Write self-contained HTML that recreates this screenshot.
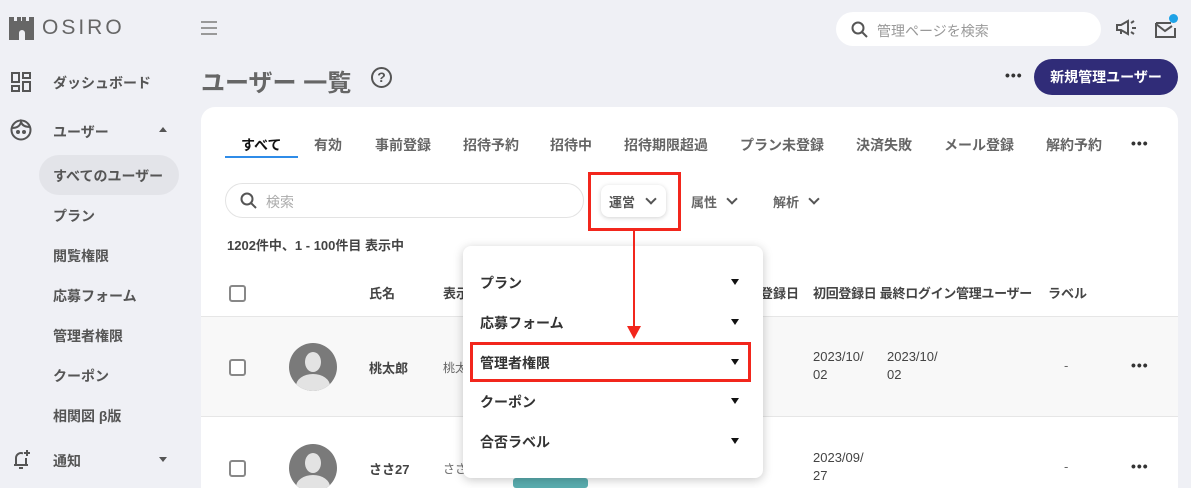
<!DOCTYPE html>
<html><head><meta charset="utf-8"><style>
*{margin:0;padding:0;box-sizing:border-box}
html,body{width:1191px;height:488px;overflow:hidden}
body{background:#eff0f5;font-family:"Liberation Sans","Noto Sans CJK JP",sans-serif;color:#555;position:relative}
.a{position:absolute;white-space:nowrap}
.b{font-weight:bold}
.side{font-size:14px;font-weight:bold;color:#555}
.tab{font-size:14px;font-weight:bold;color:#666;top:135px}
.cb{position:absolute;width:17px;height:17px;border:2px solid #888;border-radius:3px;background:#fff}
.av{position:absolute;width:48px;height:48px;border-radius:50%;background:#7a7a7a;overflow:hidden}
.av:before{content:"";position:absolute;left:16px;top:9px;width:16px;height:20px;border-radius:50%;background:#e3e3e3}
.av:after{content:"";position:absolute;left:7px;top:31px;width:34px;height:24px;border-radius:50% 50% 0 0;background:#e3e3e3}
.dd{font-size:14px;font-weight:bold;color:#333}
.tri{position:absolute;width:0;height:0;border-left:4px solid transparent;border-right:4px solid transparent;border-top:6px solid #111}
.dots{font-size:14px;font-weight:bold;color:#333;letter-spacing:1px}
.chev{position:absolute;width:8px;height:8px;border-right:2px solid #555;border-bottom:2px solid #555;transform:rotate(45deg)}
</style></head><body>
<svg class="a" style="left:9px;top:17px" width="25" height="23" viewBox="0 0 25 23"><path d="M0 0h5v4h3V0h4v4h1V0h4v4h3V0h5v23h-9v-7a3 3 0 0 0-6 0v7H0z" fill="#666"/></svg>
<div class="a" style="left:42px;top:16px;font-size:21px;letter-spacing:3px;color:#666">OSIRO</div>
<div class="a" style="left:201px;top:21px;width:16px;height:2px;background:#999;box-shadow:0 6px 0 #999,0 12px 0 #999"></div>
<svg class="a" style="left:11px;top:72px" width="20" height="20" viewBox="0 0 20 20" fill="none" stroke="#555" stroke-width="2"><rect x="1" y="1" width="7" height="9"/><rect x="12" y="1" width="7" height="5"/><rect x="1" y="14" width="7" height="5"/><rect x="12" y="10" width="7" height="9"/></svg>
<div class="a side" style="left:53px;top:73px">ダッシュボード</div>
<svg class="a" style="left:10px;top:119px" width="22" height="22" viewBox="0 0 22 22" fill="none" stroke="#555" stroke-width="2"><circle cx="11" cy="11" r="9.5"/><path d="M2 9c5 0 8-2 9-6 1 3 4 5 9 5"/><circle cx="8" cy="13" r="1" fill="#555"/><circle cx="14" cy="13" r="1" fill="#555"/></svg>
<div class="a side" style="left:53px;top:122px">ユーザー</div>
<div class="a" style="left:159px;top:127px;border-left:4px solid transparent;border-right:4px solid transparent;border-bottom:5px solid #555"></div>
<div class="a" style="left:39px;top:155px;width:140px;height:40px;border-radius:20px;background:#e3e4e9"></div>
<div class="a side" style="left:53px;top:166px">すべてのユーザー</div>
<div class="a side" style="left:53px;top:206px">プラン</div>
<div class="a side" style="left:53px;top:246px">閲覧権限</div>
<div class="a side" style="left:53px;top:286px">応募フォーム</div>
<div class="a side" style="left:53px;top:326px">管理者権限</div>
<div class="a side" style="left:53px;top:366px">クーポン</div>
<div class="a side" style="left:53px;top:406px">相関図 β版</div>
<svg class="a" style="left:11px;top:448px" width="22" height="22" viewBox="0 0 22 22" fill="none" stroke="#555" stroke-width="2"><path d="M3 17h14M5 17V10a5 5 0 0 1 7-4.5M15 10v7M8 20h4M16 2v6M13 5h6"/></svg>
<div class="a side" style="left:53px;top:451px">通知</div>
<div class="a" style="left:159px;top:457px;border-left:4px solid transparent;border-right:4px solid transparent;border-top:5px solid #555"></div>
<div class="a" style="left:836px;top:12px;width:265px;height:34px;border-radius:17px;background:#fff"></div>
<svg class="a" style="left:851px;top:21px" width="17" height="17" viewBox="0 0 17 17" fill="none" stroke="#555" stroke-width="2"><circle cx="7" cy="7" r="5.5"/><path d="M11 11l5 5"/></svg>
<div class="a" style="left:877px;top:21px;font-size:14px;color:#999">管理ページを検索</div>
<svg class="a" style="left:1115px;top:19px" width="22" height="18" viewBox="0 0 22 18" fill="none" stroke="#555" stroke-width="2"><path d="M2 6h4l7-4v13l-7-4H2zM6 11v4M16 4l3-2M17 9h4M16 13l3 2"/></svg>
<svg class="a" style="left:1155px;top:20px" width="22" height="18" viewBox="0 0 22 18" fill="none" stroke="#555" stroke-width="2"><path d="M1 3h15M1 3v14h19V8M1 4l9 7 7-5"/></svg>
<div class="a" style="left:1169px;top:14px;width:9px;height:9px;border-radius:50%;background:#1ea2e6"></div>
<div class="a b" style="left:201px;top:63px;font-size:24px;color:#666">ユーザー 一覧</div>
<div class="a" style="left:371px;top:67px;width:21px;height:21px;border:2px solid #555;border-radius:50%;font-size:14px;font-weight:bold;text-align:center;line-height:17px;color:#555">?</div>
<div class="a dots" style="left:1005px;top:67px">•••</div>
<div class="a b" style="left:1034px;top:59px;width:144px;height:36px;border-radius:18px;background:#302c78;color:#fff;font-size:14px;text-align:center;line-height:36px">新規管理ユーザー</div>
<div class="a" style="left:201px;top:107px;width:977px;height:381px;border-radius:14px 14px 0 0;background:#fff"></div>
<div class="a tab" style="left:241px;color:#111">すべて</div>
<div class="a" style="left:225px;top:156px;width:73px;height:2px;background:#2f8ce8"></div>
<div class="a tab" style="left:314px">有効</div>
<div class="a tab" style="left:375px">事前登録</div>
<div class="a tab" style="left:463px">招待予約</div>
<div class="a tab" style="left:550px">招待中</div>
<div class="a tab" style="left:624px">招待期限超過</div>
<div class="a tab" style="left:740px">プラン未登録</div>
<div class="a tab" style="left:856px">決済失敗</div>
<div class="a tab" style="left:944px">メール登録</div>
<div class="a tab" style="left:1046px">解約予約</div>
<div class="a dots" style="left:1131px;top:135px">•••</div>
<div class="a" style="left:225px;top:183px;width:359px;height:35px;border:1px solid #e3e3e3;border-radius:18px"></div>
<svg class="a" style="left:240px;top:192px" width="17" height="17" viewBox="0 0 17 17" fill="none" stroke="#555" stroke-width="2"><circle cx="7" cy="7" r="5.5"/><path d="M11 11l5 5"/></svg>
<div class="a" style="left:266px;top:192px;font-size:14px;color:#aaa">検索</div>
<div class="a" style="left:601px;top:185px;width:65px;height:32px;border-radius:8px;background:#fff;box-shadow:0 1px 5px rgba(0,0,0,.18)"></div>
<div class="a b" style="left:609px;top:192px;font-size:13px;color:#555">運営</div>
<div class="chev" style="left:647px;top:195px"></div>
<div class="a" style="left:588px;top:172px;width:93px;height:59px;border:3px solid #f2261c"></div>
<div class="a b" style="left:691px;top:192px;font-size:13px;color:#666">属性</div>
<div class="chev" style="left:728px;top:195px"></div>
<div class="a b" style="left:773px;top:192px;font-size:13px;color:#666">解析</div>
<div class="chev" style="left:810px;top:195px"></div>
<div class="a b" style="left:227px;top:235px;font-size:13px;color:#444">1202件中、1 - 100件目 表示中</div>
<div class="cb" style="left:229px;top:285px"></div>
<div class="a b" style="left:369px;top:283px;font-size:13px;color:#444">氏名</div>
<div class="a b" style="left:443px;top:283px;font-size:13px;color:#444">表示</div>
<div class="a b" style="left:760px;top:283px;font-size:13px;color:#444">登録日</div>
<div class="a b" style="left:813px;top:283px;font-size:13px;color:#444;letter-spacing:-0.3px">初回登録日 最終ログイン管理ユーザー</div>
<div class="a b" style="left:1048px;top:283px;font-size:13px;color:#444">ラベル</div>
<div class="a" style="left:201px;top:316px;width:977px;height:101px;background:#f8f8f8;border-top:1px solid #e6e6e6;border-bottom:1px solid #e6e6e6"></div>
<div class="cb" style="left:229px;top:359px"></div>
<div class="av" style="left:289px;top:343px"></div>
<div class="a b" style="left:369px;top:358px;font-size:13px;color:#444">桃太郎</div>
<div class="a" style="left:443px;top:359px;font-size:12px;color:#666">桃太</div>
<div class="a" style="left:813px;top:348px;font-size:13px;line-height:18px;color:#444">2023/10/<br>02</div>
<div class="a" style="left:887px;top:348px;font-size:13px;line-height:18px;color:#444">2023/10/<br>02</div>
<div class="a" style="left:1064px;top:358px;font-size:13px;color:#666">-</div>
<div class="a dots" style="left:1131px;top:357px">•••</div>
<div class="cb" style="left:229px;top:460px"></div>
<div class="av" style="left:289px;top:444px"></div>
<div class="a b" style="left:369px;top:459px;font-size:13px;color:#444">ささ27</div>
<div class="a" style="left:443px;top:460px;font-size:12px;color:#666">ささ</div>
<div class="a" style="left:513px;top:478px;width:75px;height:10px;background:#5aaeb0;border-radius:3px"></div>
<div class="a" style="left:813px;top:449px;font-size:13px;line-height:18px;color:#444">2023/09/<br>27</div>
<div class="a" style="left:1064px;top:459px;font-size:13px;color:#666">-</div>
<div class="a dots" style="left:1131px;top:458px">•••</div>
<div class="a" style="left:463px;top:246px;width:300px;height:232px;border-radius:8px;background:#fff;box-shadow:0 2px 10px rgba(0,0,0,.22)"></div>
<div class="a dd" style="left:480px;top:273px">プラン</div><div class="tri" style="left:731px;top:279px"></div>
<div class="a dd" style="left:480px;top:313px">応募フォーム</div><div class="tri" style="left:731px;top:319px"></div>
<div class="a dd" style="left:480px;top:353px">管理者権限</div><div class="tri" style="left:731px;top:359px"></div>
<div class="a dd" style="left:480px;top:392px">クーポン</div><div class="tri" style="left:731px;top:398px"></div>
<div class="a dd" style="left:480px;top:432px">合否ラベル</div><div class="tri" style="left:731px;top:438px"></div>
<div class="a" style="left:470px;top:342px;width:281px;height:40px;border:3px solid #f2261c"></div>
<div class="a" style="left:633px;top:230px;width:2px;height:98px;background:#f2261c"></div>
<div class="a" style="left:627px;top:326px;border-left:7px solid transparent;border-right:7px solid transparent;border-top:13px solid #f2261c"></div>
</body></html>
